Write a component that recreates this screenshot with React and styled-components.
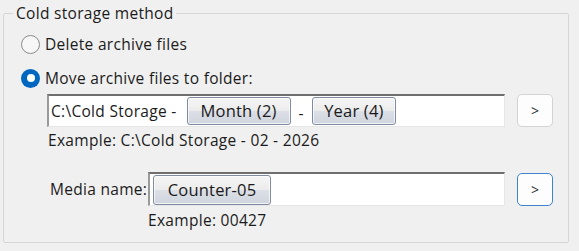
import React from "react";
import styled, { createGlobalStyle } from "styled-components";

const Global = createGlobalStyle`
  html, body { margin: 0; padding: 0; background: #f0f0f0; }
  body { font-family: "Open Sans", "Noto Sans", sans-serif; font-size: 15.5px; letter-spacing: 0.3px; color: #1b1b1b; }
  * { box-sizing: border-box; }
`;

const Group = styled.fieldset`
  margin: 3px 0 0 3px;
  width: 566px;
  height: 240px;
  border: 1px solid #d6d6d6;
  border-radius: 2px;
  padding: 0 0 0 17px;
  display: flex;
  flex-direction: column;
`;

const Legend = styled.legend`
  margin-left: -8px;
  padding: 0 3px;
  line-height: 20px;
`;

const RadioRow = styled.label`
  display: flex;
  align-items: center;
  gap: 5px;
  height: 24px;
  margin-top: ${(p) => p.$top}px;
`;

const Circle = styled.span`
  width: 19px;
  height: 19px;
  border-radius: 50%;
  flex: none;
  ${(p) =>
    p.$checked
      ? `background: #0067c0; border: none; display:flex; align-items:center; justify-content:center;
         &::after { content: ""; width: 8px; height: 8px; border-radius: 50%; background: #fff; }`
      : `background: #f7f7f7; border: 1.5px solid #8a8a8a;`}
`;

const FieldRow = styled.div`
  display: flex;
  align-items: center;
  margin-top: ${(p) => p.$top}px;
  margin-left: ${(p) => p.$left}px;
`;

const FieldLabel = styled.span`
  width: 98px;
`;

const Box = styled.div`
  width: ${(p) => p.$w}px;
  height: ${(p) => p.$h}px;
  background: #fff;
  border-top: 2px solid #6f6f6f;
  border-left: 2px solid #9a9a9a;
  border-right: 1px solid #e6e6e6;
  border-bottom: 1px solid #e6e6e6;
  display: flex;
  align-items: center;
  padding-left: ${(p) => p.$pad}px;
  gap: 8px;
`;

const Tag = styled.span`
  display: inline-flex;
  align-items: center;
  justify-content: center;
  flex: none;
  width: ${(p) => p.$w}px;
  height: ${(p) => p.$h}px;
  margin-left: ${(p) => p.$ml || 0}px;
  border: 1px solid #7f8ba3;
  border-radius: 3px;
  box-shadow: inset 0 0 0 1px rgba(255, 255, 255, 0.7);
  background: linear-gradient(#f5f5f5 0%, #ececec 48%, #dcdfe6 52%, #cfd4de 100%);
  font-size: 16.5px;
  letter-spacing: 0.2px;
  color: #1a1a1a;
  padding-bottom: 1px;
`;

const Dash = styled.span`
  padding-top: 4px;
`;

const ArrowBtn = styled.button`
  margin-left: 12px;
  width: 36px;
  height: 33px;
  border-radius: 5px;
  border: ${(p) => (p.$focus ? "1.5px solid #3f84cf" : "1px solid #d3d3d3")};
  background: #fdfdfd;
  font-family: inherit;
  font-size: 14px;
  color: #333;
  padding: 0;
  display: flex;
  align-items: center;
  justify-content: center;
`;

const Example = styled.div`
  margin-top: ${(p) => p.$top}px;
  margin-left: ${(p) => p.$left}px;
  line-height: 18px;
`;

export default function App() {
  return (
    <>
      <Global />
      <Group>
        <Legend>Cold storage method</Legend>
        <RadioRow $top={9}>
          <Circle />
          Delete archive files
        </RadioRow>
        <RadioRow $top={10}>
          <Circle $checked />
          Move archive files to folder:
        </RadioRow>
        <FieldRow $top={4} $left={26}>
          <Box $w={458} $h={33} $pad={2}>
            <span>C:\Cold Storage -</span>
            <Tag $w={104} $h={28} $ml={2}>Month (2)</Tag>
            <Dash>-</Dash>
            <Tag $w={84} $h={28}>Year (4)</Tag>
          </Box>
          <ArrowBtn>&gt;</ArrowBtn>
        </FieldRow>
        <Example $top={4} $left={27}>Example: C:\Cold Storage - 02 - 2026</Example>
        <FieldRow $top={23} $left={29}>
          <FieldLabel>Media name:</FieldLabel>
          <Box $w={357} $h={34} $pad={3}>
            <Tag $w={118} $h={30}>Counter-05</Tag>
          </Box>
          <ArrowBtn $focus>&gt;</ArrowBtn>
        </FieldRow>
        <Example $top={5} $left={127}>Example: 00427</Example>
      </Group>
    </>
  );
}
